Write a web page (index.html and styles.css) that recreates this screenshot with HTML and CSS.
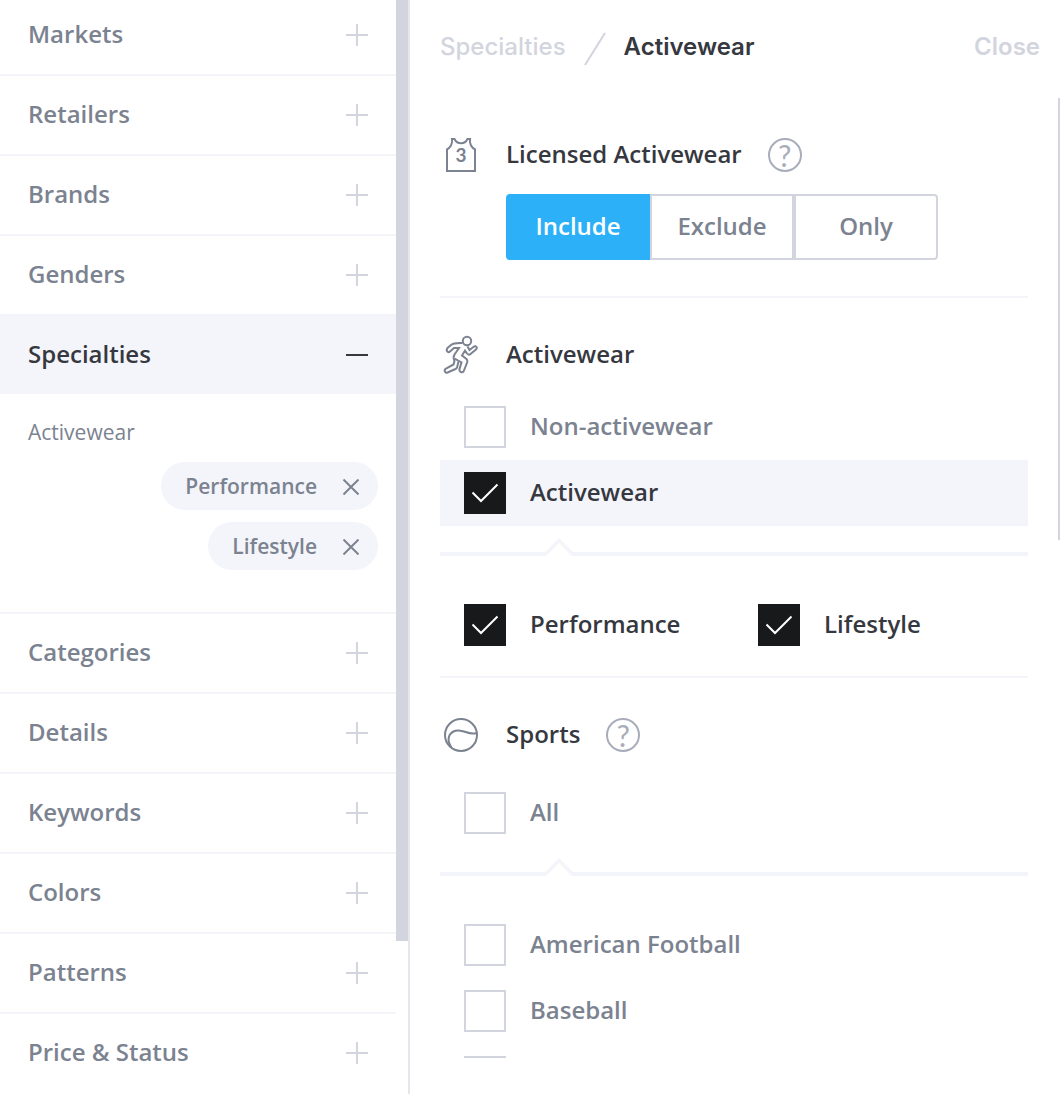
FILE: index.html
```html
<!DOCTYPE html>
<html lang="en">
<head>
  <meta charset="UTF-8">
  <meta name="viewport" content="width=device-width, initial-scale=1.0">
  <title>Filters - Specialties</title>
  <link rel="stylesheet" href="styles.css">
</head>
<body>
  <!-- Shared icons -->
  <svg class="sprite" aria-hidden="true">
    <symbol id="plus" viewBox="0 0 22 22"><path d="M11 0v22M0 11h22"/></symbol>
    <symbol id="minus" viewBox="0 0 22 22"><path d="M0 11h22"/></symbol>
    <symbol id="cross" viewBox="0 0 16 16"><path d="M0.5 0.5l15 15M15.5 0.5l-15 15"/></symbol>
    <symbol id="notch" viewBox="0 0 30 18"><path d="M0 14h1L15 0l14 14h1v4h-2L15 5 2 18H0z"/></symbol>
  </svg>

  <div class="layout">
    <aside class="sidebar">
      <nav class="filters">
        <button class="filter">Markets <svg class="toggle"><use href="#plus"/></svg></button>
        <button class="filter">Retailers <svg class="toggle"><use href="#plus"/></svg></button>
        <button class="filter">Brands <svg class="toggle"><use href="#plus"/></svg></button>
        <button class="filter">Genders <svg class="toggle"><use href="#plus"/></svg></button>
        <button class="filter active" aria-expanded="true">Specialties <svg class="toggle"><use href="#minus"/></svg></button>
        <div class="selection">
          <p class="selection-title">Activewear</p>
          <button class="chip">Performance <svg class="cross"><use href="#cross"/></svg></button>
          <button class="chip">Lifestyle <svg class="cross"><use href="#cross"/></svg></button>
        </div>
        <button class="filter">Categories <svg class="toggle"><use href="#plus"/></svg></button>
        <button class="filter">Details <svg class="toggle"><use href="#plus"/></svg></button>
        <button class="filter">Keywords <svg class="toggle"><use href="#plus"/></svg></button>
        <button class="filter">Colors <svg class="toggle"><use href="#plus"/></svg></button>
        <button class="filter">Patterns <svg class="toggle"><use href="#plus"/></svg></button>
        <button class="filter">Price &amp; Status <svg class="toggle"><use href="#plus"/></svg></button>
      </nav>
      <div class="sidebar-scrollbar"></div>
    </aside>

    <main class="panel">
      <header class="panel-header">
        <a href="#" class="crumb">Specialties</a>
        <svg class="slash" viewBox="0 0 22 34"><path d="M1 33L21 1"/></svg>
        <span class="crumb current">Activewear</span>
        <button class="close">Close</button>
      </header>

      <div class="panel-body">
        <section class="section">
          <div class="section-head">
            <svg class="icon" viewBox="0 0 42 42">
              <path d="M7 37V15.300C10 14 13 10 12 5H14.500C16 8 18 9.300 21 9.300S26 8 27.500 5H30C29 10 32 14 35 15.300V37z"/>
              <text x="21" y="28" text-anchor="middle">3</text>
            </svg>
            <h2>Licensed Activewear</h2>
            <button class="help" aria-label="Help">?</button>
          </div>
          <div class="segmented">
            <button class="segment selected">Include</button>
            <button class="segment">Exclude</button>
            <button class="segment">Only</button>
          </div>
        </section>

        <section class="section">
          <div class="section-head">
            <svg class="icon" viewBox="0 0 42 42">
              <circle cx="27" cy="7" r="4.200"/>
              <path d="M22.500 9C18 9 14 8.500 11 11L7.500 14C5.500 16.500 8 19.500 10 17.500L14 14H19L14.500 20.500C13 23 13.500 25 14.500 27L13.500 30.500L6 34.500C3.500 36 5 39.500 7.500 38.500L15.500 35C16.500 34.500 17 34 17.200 33L18.500 27.500"/>
              <path d="M14.500 24.500L21.500 28.500L19.500 35C19 38.500 23 39.500 24 36.500L27.300 28C27.600 26.500 27.300 25.800 26.500 25L22 21.500L25 16.500L27 19.500C28 20.800 29.500 21 30.500 20L36 15.500C38 13.500 36 11.500 34 12.500L29.500 16L27.500 12.500"/>
            </svg>
            <h2>Activewear</h2>
          </div>
          <label class="option"><input type="checkbox"><span>Non-activewear</span></label>
          <label class="option highlighted"><input type="checkbox" checked><span>Activewear</span></label>
          <div class="divider"><svg class="notch"><use href="#notch"/></svg></div>
          <div class="option-grid">
            <label class="option"><input type="checkbox" checked><span>Performance</span></label>
            <label class="option"><input type="checkbox" checked><span>Lifestyle</span></label>
          </div>
        </section>

        <section class="section sports">
          <div class="section-head">
            <svg class="icon" viewBox="0 0 42 42">
              <circle cx="21" cy="21" r="16"/>
              <path d="M11.500 33.500C6.500 26 8 19 15.500 16.800C24 14.500 28 22 36.800 19"/>
            </svg>
            <h2>Sports</h2>
            <button class="help" aria-label="Help">?</button>
          </div>
          <label class="option"><input type="checkbox"><span>All</span></label>
          <div class="divider"><svg class="notch"><use href="#notch"/></svg></div>
          <div class="option-list">
            <label class="option"><input type="checkbox"><span>American Football</span></label>
            <label class="option"><input type="checkbox"><span>Baseball</span></label>
            <div class="option"><input type="checkbox" aria-label="Basketball"></div>
          </div>
        </section>
      </div>
    </main>
  </div>
</body>
</html>
```
FILE: styles.css
```css
* {
  box-sizing: border-box;
}
body {
  margin: 0;
  font-family: "Open Sans", "Noto Sans", sans-serif;
  font-size: 24px;
  font-weight: 600;
  line-height: 36px;
  color: #7b8290;
  background-color: #fff;
}
button {
  font: inherit;
  color: inherit;
  background: none;
  border: none;
  padding: 0;
  cursor: pointer;
}
svg {
  flex: none;
  fill: none;
  stroke: currentColor;
  stroke-width: 2;
}
.sprite {
  display: none;
}
.layout {
  display: flex;
  height: 100vh;
}

/* Sidebar */
.sidebar {
  flex: 0 0 410px;
  display: flex;
  overflow: hidden;
  border-right: 2px solid #e6e6ec;
}
.filters {
  flex: 1;
  margin-top: -4px;
}
.filter {
  display: flex;
  align-items: center;
  justify-content: space-between;
  width: 100%;
  height: 80px;
  padding: 0 28px 2px;
  border-bottom: 2px solid #f4f5fa;
}
.filter:last-child {
  border-bottom-color: transparent;
}
.filter.active {
  height: 78px;
  border-bottom: none;
  background-color: #f4f5fa;
  color: #363840;
}
.toggle {
  width: 22px;
  height: 22px;
  margin-top: 2px;
  color: #d2d5de;
}
.active .toggle {
  color: #363840;
}
.selection {
  display: flex;
  flex-direction: column;
  align-items: flex-end;
  gap: 12px;
  padding: 20px 18px 42px 28px;
  border-bottom: 2px solid #f4f5fa;
  font-size: 21px;
}
.selection-title {
  align-self: flex-start;
  margin: 0;
  font-weight: 400;
}
.chip {
  display: flex;
  align-items: center;
  gap: 26px;
  height: 48px;
  padding: 0 19px 0 24px;
  border-radius: 24px;
  background-color: #f4f5fa;
}
.cross {
  width: 16px;
  height: 16px;
  margin-top: 2px;
}
.sidebar-scrollbar {
  width: 12px;
  height: 86%;
  background-color: #d2d5de;
}

/* Panel */
.panel {
  flex: 1;
  display: flex;
  flex-direction: column;
  min-width: 0;
  padding-bottom: 36px;
}
.panel-header {
  display: flex;
  align-items: center;
  gap: 18px;
  height: 98px;
  padding: 0 20px 4px 30px;
  font-family: Inter, sans-serif;
  font-size: 24px;
  font-weight: 500;
}
.crumb,
.close {
  color: #d2d5de;
  text-decoration: none;
}
.crumb.current {
  color: #363840;
  font-weight: 600;
}
.slash {
  width: 22px;
  height: 34px;
  margin-top: 4px;
  color: #d2d5de;
}
.close {
  margin-left: auto;
  font-weight: 600;
}
.panel-body {
  position: relative;
  flex: 1;
  overflow: hidden;
  padding: 0 32px 0 30px;
}
.panel-body::after {
  content: "";
  position: absolute;
  top: 0;
  right: 0;
  width: 2px;
  height: 46%;
  background-color: #d2d5de;
}
.section {
  padding-top: 36px;
  border-bottom: 2px solid #f4f5fa;
  padding-bottom: 18px;
}
.section-head {
  display: flex;
  align-items: center;
  gap: 24px;
  height: 42px;
  margin-bottom: 18px;
}
.sports .section-head {
  margin-bottom: 24px;
}
.section h2 {
  margin: 0;
  padding-bottom: 2px;
  font-size: 24px;
  font-weight: 600;
  color: #363840;
}
.icon {
  width: 42px;
  height: 42px;
}
.icon text {
  fill: currentColor;
  stroke: none;
  font-family: Lato, sans-serif;
  font-size: 19px;
  font-weight: 700;
}
.help {
  width: 34px;
  height: 34px;
  margin-left: 2px;
  border: 2px solid #a9adbb;
  border-radius: 50%;
  color: #a9adbb;
  font-family: Lato, sans-serif;
  font-size: 30px;
  font-weight: 400;
  line-height: 30px;
}

/* Include / Exclude / Only */
.segmented {
  display: flex;
  margin: 0 0 18px 66px;
}
.segment {
  width: 144px;
  height: 66px;
  padding-bottom: 2px;
  border: 2px solid #d2d5de;
}
.segment:first-child {
  border-radius: 4px 0 0 4px;
}
.segment:last-child {
  border-radius: 0 4px 4px 0;
}
.segment.selected {
  border-color: #2cb0f7;
  background-color: #2cb0f7;
  color: #fff;
}

/* Checkboxes */
.option {
  display: flex;
  align-items: center;
  gap: 24px;
  height: 66px;
  padding-left: 24px;
}
.option:has(:checked) {
  color: #363840;
}
.option.highlighted {
  background-color: #f4f5fa;
}
.option span {
  padding-bottom: 2px;
}
.option input {
  appearance: none;
  flex: none;
  width: 42px;
  height: 42px;
  margin: 0;
  border: 2px solid #d2d5de;
}
.option input:checked {
  border: none;
  background: #18191b url("data:image/svg+xml,%3Csvg xmlns='http://www.w3.org/2000/svg' viewBox='0 0 42 42'%3E%3Cpath d='M8.500 20.500L17 29L33.500 12.500' fill='none' stroke='white' stroke-width='2'/%3E%3C/svg%3E");
}
.option-grid {
  display: grid;
  grid-template-columns: 1fr 1fr;
}

/* Line with a pointer towards the option above */
.divider {
  display: flex;
  align-items: flex-end;
  margin: 12px 0 36px;
}
.divider::before,
.divider::after {
  content: "";
  height: 4px;
  background-color: #f4f5fa;
}
.divider::before {
  width: 104px;
}
.divider::after {
  flex: 1;
}
.notch {
  width: 30px;
  height: 18px;
  fill: #f4f5fa;
  stroke: none;
}
```
